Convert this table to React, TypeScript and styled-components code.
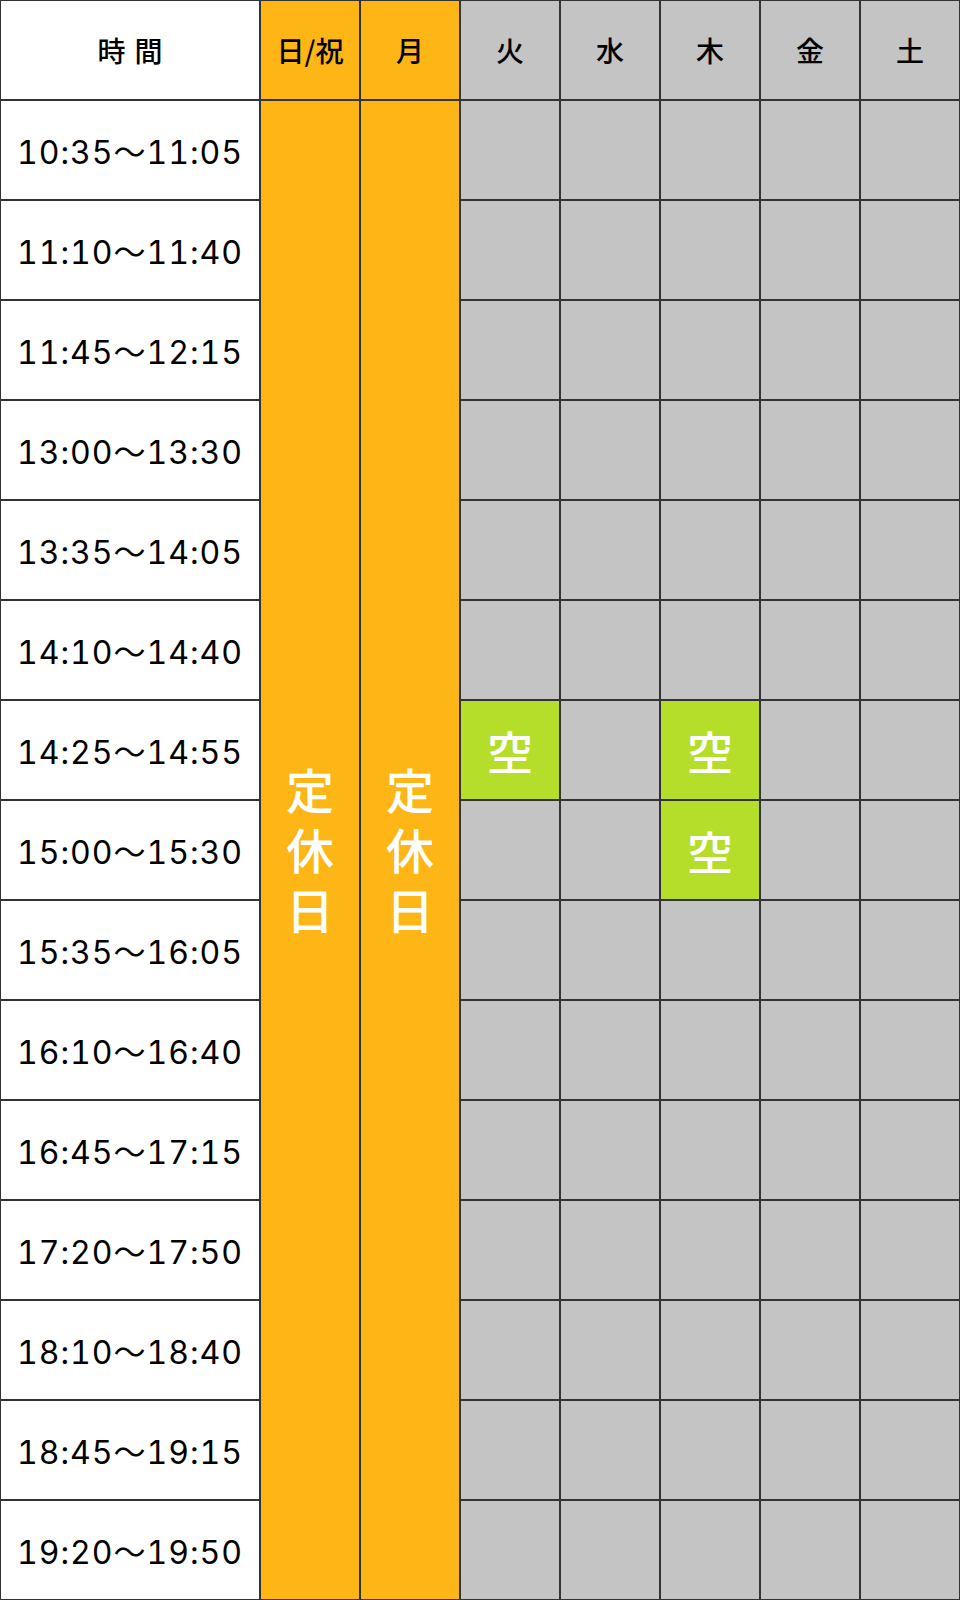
import React from "react";
import styled, { createGlobalStyle } from "styled-components";

const GlobalStyle = createGlobalStyle`
  html, body {
    margin: 0;
    padding: 0;
    background: #ffffff;
  }
  body {
    font-family: "Noto Sans CJK JP", "Noto Sans", sans-serif;
    color: #000;
  }
`;

type Tone = "white" | "orange" | "gray" | "green";

const toneColors: Record<Tone, string> = {
  white: "#ffffff",
  orange: "#feb516",
  gray: "#c4c4c4",
  green: "#b5de2b",
};

const days = ["火", "水", "木", "金", "土"];

const times = [
  "10:35～11:05",
  "11:10～11:40",
  "11:45～12:15",
  "13:00～13:30",
  "13:35～14:05",
  "14:10～14:40",
  "14:25～14:55",
  "15:00～15:30",
  "15:35～16:05",
  "16:10～16:40",
  "16:45～17:15",
  "17:20～17:50",
  "18:10～18:40",
  "18:45～19:15",
  "19:20～19:50",
];

// 空き枠: "row-dayIndex"
const openSlots = new Set(["6-0", "6-2", "7-2"]);

function App() {
  return (
    <>
      <GlobalStyle />
      <Table>
        <HeadCell tone="white">
          <TimeHead>時間</TimeHead>
        </HeadCell>
        <HeadCell tone="orange">日/祝</HeadCell>
        <HeadCell tone="orange">月</HeadCell>
        {days.map((d) => (
          <HeadCell key={d} tone="gray">
            {d}
          </HeadCell>
        ))}

        {times.map((t, row) => (
          <React.Fragment key={t}>
            <TimeCell style={{ gridRow: row + 2 }}>{t}</TimeCell>
            {row === 0 && (
              <>
                <Closed col={2}>
                  <ClosedText>定休日</ClosedText>
                </Closed>
                <Closed col={3}>
                  <ClosedText>定休日</ClosedText>
                </Closed>
              </>
            )}
            {days.map((d, i) => {
              const open = openSlots.has(`${row}-${i}`);
              return (
                <Slot key={d} tone={open ? "green" : "gray"}>
                  {open ? "空" : ""}
                </Slot>
              );
            })}
          </React.Fragment>
        ))}
      </Table>
    </>
  );
}

export default App;

const Table = styled.div`
  width: 960px;
  height: 1600px;
  box-sizing: border-box;
  padding: 1px;
  background: #333333;
  display: grid;
  grid-template-columns: 258px repeat(7, 98px);
  grid-template-rows: repeat(16, 98px);
  gap: 2px;
`;

const Cell = styled.div<{ tone: Tone }>`
  background: ${({ tone }) => toneColors[tone]};
  display: flex;
  align-items: center;
  justify-content: center;
`;

const HeadCell = styled(Cell)`
  font-size: 28px;
  font-weight: 500;
  color: #000;
`;

const TimeHead = styled.span`
  letter-spacing: 9px;
  text-indent: 9px;
  display: inline-block;
`;

const TimeCell = styled.div`
  grid-column: 1;
  background: #ffffff;
  display: flex;
  align-items: center;
  justify-content: center;
  font-family: Inter, "Noto Sans CJK JP", sans-serif;
  font-size: 32px;
  font-variant-numeric: tabular-nums;
  letter-spacing: 1px;
  color: #000;
`;

const Closed = styled.div<{ col: number }>`
  grid-column: ${({ col }) => col};
  grid-row: 2 / span 15;
  background: ${toneColors.orange};
  display: flex;
  align-items: center;
  justify-content: center;
`;

const ClosedText = styled.div`
  width: 48px;
  font-size: 48px;
  font-weight: 500;
  line-height: 60px;
  color: #ffffff;
  text-align: center;
  padding-bottom: 4px;
`;

const Slot = styled(Cell)`
  font-size: 46px;
  font-weight: 500;
  color: #ffffff;
`;
